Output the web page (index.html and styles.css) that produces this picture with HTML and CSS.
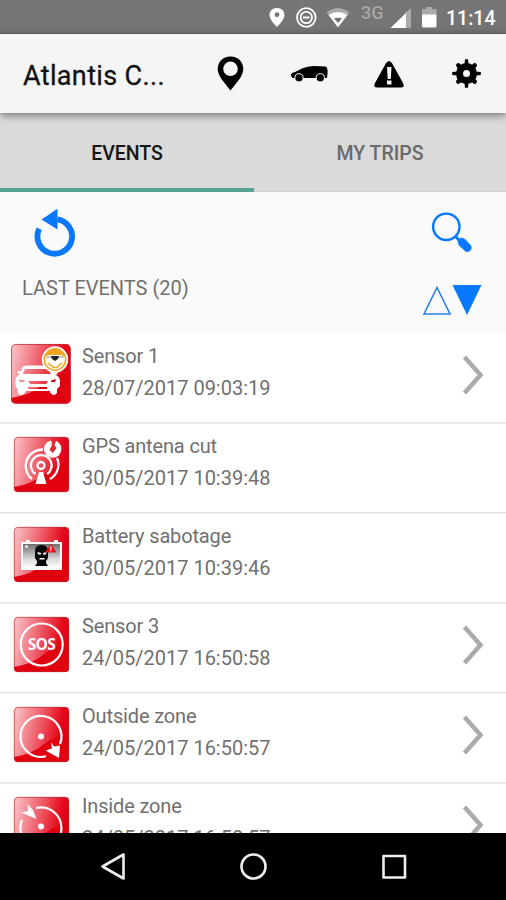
FILE: index.html
```html
<!DOCTYPE html>
<html lang="en">
<head>
<meta charset="utf-8">
<title>Events</title>
<link rel="stylesheet" href="styles.css">
</head>
<body>
<div class="phone">
  <header class="status">
    <svg class="status-icons" viewBox="256 0 184 34" width="184" height="34">
      <path fill="#fff" fill-rule="evenodd" d="M277 8C272.500 8 269.500 11.200 269.500 15C269.500 20 277 27 277 27S284.500 20 284.500 15C284.500 11.200 281.500 8 277 8ZM277 12.300A2.400 2.400 0 1 1 277 17.100A2.400 2.400 0 0 1 277 12.300Z"/>
      <g fill="none" stroke="#fff"><circle cx="306.300" cy="17.500" r="9.300" stroke-width="1.800"/><circle cx="306.300" cy="17.500" r="5.700" stroke-width="1.800"/><path stroke-width="2" d="M303 17.500H309.600"/></g>
      <path fill="#aaa" d="M326.500 12.500Q338 3.500 349.500 12.500L345 18H331Z"/>
      <path fill="#fff" fill-rule="evenodd" d="M328.500 15Q338 9 347.500 15L338 27.500ZM334 18.500L338 23L342 18.500Q338 16.500 334 18.500Z"/>
      <path fill="#aaa" d="M405 13L411 8V28H405Z"/><path fill="#fff" d="M390.500 28L406 13V28Z"/>
      <path fill="#aaa" d="M426 7H432V9H436.500V15H422V9H426Z"/><path fill="#fff" d="M422 14.500H436.500V26Q436.500 27.500 435 27.500H423.500Q422 27.500 422 26Z"/>
    </svg>
    <span class="network">3G</span>
    <span class="clock">11:14</span>
  </header>
  <nav class="appbar">
    <h1>Atlantis C...</h1>
    <svg viewBox="206 34 300 78" width="300" height="78">
      <path fill-rule="evenodd" d="M230.500 56.500C223 56.500 217.700 61.800 217.700 69C217.700 76 224 82 230.500 90.500C237 82 243.300 76 243.300 69C243.300 61.800 238 56.500 230.500 56.500ZM230.500 61.500A7.300 7.300 0 1 1 230.500 76.100A7.300 7.300 0 0 1 230.500 61.500Z"/>
      <path d="M291 76Q290.500 72.800 295 72L302 68.500Q307 66 314 66L325.500 66.500Q328 67.500 327.600 73L327 78H292.500Z"/>
      <g stroke="#f5f5f5" stroke-width="1"><circle cx="299" cy="77.800" r="4.100"/><circle cx="320.300" cy="77.800" r="4.100"/></g>
      <path d="M385.800 63.500Q389 58.500 392.200 63.500L403 83Q405 87.500 401 87.500H377Q373 87.500 375 83Z"/><path fill="#f5f5f5" d="M387 67H391.500L390.800 79H387.700ZM387 80.500H391.500V84.500H387Z"/>
      <circle cx="466.500" cy="73.500" r="7" fill="none" stroke="#000" stroke-width="7"/>
      <path d="M464.400 65L465 59.200H468L468.600 65ZM464.400 82L465 87.800H468L468.600 82ZM458 71.400L452.200 72V75L458 75.600ZM475 71.400L480.800 72V75L475 75.600Z"/>
      <path stroke="#000" stroke-width="4.500" stroke-linecap="round" d="M458.300 65.300L460 67M473 80L474.700 81.700M458.300 81.700L460 80M473 67L474.700 65.300"/>
    </svg>
  </nav>
  <div class="tabs"><div class="tab active">EVENTS</div><div class="tab">MY TRIPS</div></div>
  <section class="tools">
    <div class="tool-left">
      <svg viewBox="22 206 64 56" width="64" height="56"><path d="M38.800 228.500A17.300 17.300 0 1 0 57 219" fill="none" stroke="#0878ff" stroke-width="5.800" transform="translate(.4 .3)"/><path fill="#0878ff" d="M41.500 219.500L57.500 208.800V229.500Z"/></svg>
      <div class="count">LAST EVENTS (20)</div>
    </div>
    <svg viewBox="416 202 70 126" width="70" height="126">
      <circle cx="446.300" cy="226.800" r="13.200" fill="none" stroke="#0878ff" stroke-width="2.400"/><path d="M455 236L461 242" stroke="#0878ff" stroke-width="3"/><path fill="#0878ff" d="M457.500 240L461.500 237.500L465 239L471 245.500Q472.500 248 470.500 250.500Q468 252.800 465.500 251.500L458.500 245Z"/>
      <path d="M437 287.500L450 314H424Z" fill="none" stroke="#2a7fe8" stroke-width="1.600"/><path fill="#0878ff" d="M452.500 285H481.500L467 315Z"/>
    </svg>
  </section>
  <main class="list">
    <article class="row">
      <svg class="icon" viewBox="0 0 82 88" width="82" height="88">
        <defs>
          <linearGradient id="red" x1="0" y1=".1" x2="1" y2=".3"><stop offset="0" stop-color="#fac4c8"/><stop offset=".45" stop-color="#ef6571"/><stop offset=".85" stop-color="#e50b1c"/><stop offset="1" stop-color="#df0011"/></linearGradient>
          <linearGradient id="metal" x1="0" y1="0" x2="0" y2="1"><stop offset="0" stop-color="#707070"/><stop offset=".65" stop-color="#ddd"/><stop offset="1" stop-color="#fff"/></linearGradient>
          <g id="tile"><rect x="14" y="14" width="55" height="55" rx="4" fill="url(#red)"/><path fill="#e00010" d="M14 64Q32 61 43 52Q55 42 69 40V65Q69 69 65 69H18Q14 69 14 65Z"/><rect x="14.300" y="14.300" width="54.400" height="54.400" rx="4" fill="none" stroke="#bd3036" stroke-width=".7"/></g>
        </defs>
        <use href="#tile" transform="translate(-3.900 -4) scale(1.080)"/>
        <path fill="#fff" fill-rule="evenodd" d="M22 35Q23 32.500 27 32.500H46Q50 32.500 52 36L53 39L57 38L58 40L56 42Q60 44 60 48V53L57 56V60Q54 64 50.500 60L50 58H26L25 60Q21 64 17.500 60V56L15.500 53V47Q16 43 20 41L17 40L18 38L21 38ZM25 36L22.500 41H51L48 36ZM19 46L20 49H25L24 47.500ZM56 46L51 47.500V49H55ZM28 48L30 51H46L48 48ZM28 54V56H47V54Z"/>
        <circle cx="55" cy="26.500" r="13.200" fill="#fff"/><circle cx="55" cy="26.500" r="10.700" fill="#fff" stroke="#efa51e" stroke-width="1.500"/><path fill="#efa51e" d="M45 23Q48 16 55 16T65 23L60 22H50Z"/><path stroke="#777" stroke-width=".8" d="M46 24H64"/><path fill="#222" d="M51 23H59L58 26L55 28L52 26Z"/><path d="M48 30L53.500 34.500H56.500L62 30" fill="none" stroke="#efa51e" stroke-width="1.600"/>
      </svg>
      <div class="info"><p class="name">Sensor 1</p><p>28/07/2017 09:03:19</p></div>
      <svg class="chevron" viewBox="0 0 24 40" width="24" height="40"><path d="M2.500 2L18.500 20L2.500 38"/></svg>
    </article>
    <article class="row">
      <svg class="icon" viewBox="0 0 82 88" width="82" height="88"><use href="#tile"/>
        <g fill="none" stroke="#fff" stroke-width="2.300"><circle cx="41" cy="42.500" r="3.500"/><path d="M35.500 51A10.300 10.300 0 1 1 47 51M32 56A16.500 16.500 0 0 1 43 26.500M57 35A16.500 16.500 0 0 1 50 56"/></g>
        <path fill="#fff" d="M39 49H43L46.500 61H35.500Z"/><circle cx="52.700" cy="26" r="8.700" fill="#fff"/><path fill="#e52633" d="M51 15.500H57L54.500 22L56.500 25L53 30L49.500 27L52 22Z"/>
      </svg>
      <div class="info"><p class="name">GPS antena cut</p><p>30/05/2017 10:39:48</p></div>
    </article>
    <article class="row">
      <svg class="icon" viewBox="0 0 82 88" width="82" height="88"><use href="#tile"/>
        <path fill="#fff" d="M21 29H26V27H30V29H54V27H58V29H62V57H21Z"/><path fill="url(#metal)" d="M23 31H60V55H23Z"/><path stroke="#eee" stroke-width="1.500" d="M25 33.500H28M26.500 32V35"/>
        <path fill="#080808" d="M35 38Q35 32 41.500 32T48 38V45L46 48V50L48 53H35L37 50V48L35 45Z"/><path fill="#fff" d="M37.500 39L41 40V41.500H38ZM43 40L46.500 39L46 41.500H43ZM39.500 45H44.500V46.500H39.500Z"/>
        <path fill="#e9101c" d="M51 30.500L56.500 39.500H45Z"/><path stroke="#fff" stroke-width="1.300" d="M50.800 33.500V36.500M50.800 37.300V38.300"/>
      </svg>
      <div class="info"><p class="name">Battery sabotage</p><p>30/05/2017 10:39:46</p></div>
    </article>
    <article class="row">
      <svg class="icon" viewBox="0 0 82 88" width="82" height="88"><use href="#tile"/><circle cx="41.700" cy="41.500" r="21" fill="none" stroke="#fff" stroke-width="2.200"/><text class="sos" x="41.700" y="47.300" text-anchor="middle" textLength="28">SOS</text></svg>
      <div class="info"><p class="name">Sensor 3</p><p>24/05/2017 16:50:58</p></div>
      <svg class="chevron" viewBox="0 0 24 40" width="24" height="40"><path d="M2.500 2L18.500 20L2.500 38"/></svg>
    </article>
    <article class="row">
      <svg class="icon" viewBox="0 0 82 88" width="82" height="88"><use href="#tile"/><path d="M60 51A20.500 20.500 0 1 0 46 63.300" fill="none" stroke="#fff" stroke-width="2.200"/><circle cx="41" cy="43.500" r="3" fill="#fff"/><path fill="#fff" d="M51 49L54 53.500L60 52.500L59 65L45.500 57.500L52 55.500Z"/></svg>
      <div class="info"><p class="name">Outside zone</p><p>24/05/2017 16:50:57</p></div>
      <svg class="chevron" viewBox="0 0 24 40" width="24" height="40"><path d="M2.500 2L18.500 20L2.500 38"/></svg>
    </article>
    <article class="row">
      <svg class="icon" viewBox="0 0 82 88" width="82" height="88"><use href="#tile"/><path d="M36 25A20.500 20.500 0 1 1 22 37" fill="none" stroke="#fff" stroke-width="2.200"/><circle cx="41" cy="43.500" r="3" fill="#fff"/><path fill="#fff" d="M27.500 21L33 27L36.500 36L21 29.500L28 28Z"/></svg>
      <div class="info"><p class="name">Inside zone</p><p>24/05/2017 16:50:57</p></div>
      <svg class="chevron" viewBox="0 0 24 40" width="24" height="40"><path d="M2.500 2L18.500 20L2.500 38"/></svg>
    </article>
  </main>
  <footer class="navbar">
    <svg viewBox="0 833 506 67" width="506" height="67" fill="none" stroke="#eee" stroke-width="2.600" stroke-linejoin="round"><path d="M102.500 866.500L123.500 854.500V878.500Z"/><circle cx="253.500" cy="866.500" r="12"/><rect x="383.500" y="856" width="21.500" height="21.500"/></svg>
  </footer>
</div>
</body>
</html>
```
FILE: styles.css
```css
* { box-sizing: border-box; }
body { margin: 0; background: #fff; font-family: Roboto, "Liberation Sans", sans-serif; }
svg { display: block; flex: none; }
.phone { width: 506px; height: 900px; display: flex; flex-direction: column; overflow: hidden; }
.status { height: 34px; flex: none; background: #757575; display: grid; grid-template-columns: 360px 86px 60px; align-items: start; border-bottom: 1px solid #666; }
.status-icons { grid-area: 1 / 1 / 2 / 4; margin-left: 256px; }
.network { grid-area: 1 / 2; font-size: 18px; line-height: 20px; padding: 3px 0 0 1px; color: #a6a6a6; font-weight: 500; }
.clock { grid-area: 1 / 3; font-size: 19.500px; line-height: 24px; padding-top: 7px; color: #fff; font-weight: 500; }
.appbar { height: 79px; flex: none; background: #f5f5f5; display: flex; justify-content: space-between; padding-left: 23px; box-shadow: 0 2px 8px rgba(0,0,0,.5); z-index: 1; }
h1 { margin: 2px 0 0; font-size: 27px; line-height: 80px; letter-spacing: .35px; font-weight: 400; color: #111; -webkit-text-stroke: .3px #111; white-space: nowrap; }
.tabs { height: 79px; flex: none; display: grid; grid-template-columns: 254px 252px; background: #dadada; }
.tab { display: flex; align-items: center; justify-content: center; font-size: 19.500px; font-weight: 500; color: #6a6a6a; padding-top: 3px; border-bottom: 1px solid #d2d2d2; }
.tab.active { color: #151515; padding-top: 6px; border-bottom: 4px solid #57a393; }
.tools { height: 141px; flex: none; background: #fafafa; display: flex; justify-content: space-between; padding: 10px 20px 0 22px; }
.tool-left { padding-top: 4px; }
.count { font-size: 20px; line-height: 24px; margin-top: 14px; color: #707070; }
.list { flex: 1; min-height: 0; overflow: hidden; background: #fff; }
.row { height: 90px; display: flex; background: linear-gradient(#e4e4e4, #e4e4e4) 0 100% / 100% 1px no-repeat; box-shadow: 0 1px #efefef; }
.info { flex: 1; padding-top: 7px; }
p { margin: 0; font-size: 20px; line-height: 32px; color: #707070; white-space: nowrap; }
.name { letter-spacing: -.15px; }
.chevron { margin: 22px 20px 0 0; fill: none; stroke: #aaa; stroke-width: 4.500px; }
.sos { fill: #fff; font: 700 15.500px "Open Sans", sans-serif; }
.navbar { height: 67px; flex: none; background: #000; }
```
